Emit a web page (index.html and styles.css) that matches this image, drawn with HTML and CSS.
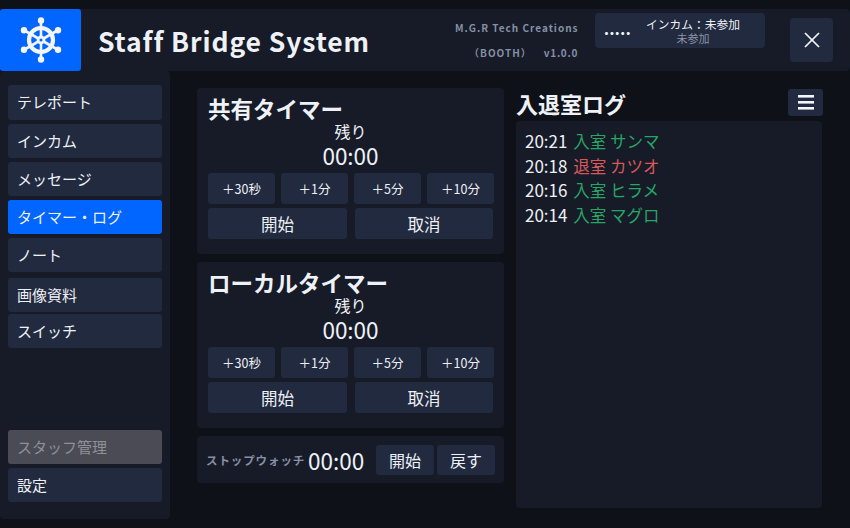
FILE: index.html
```html
<!DOCTYPE html>
<html lang="ja">
<head>
  <meta charset="UTF-8">
  <meta name="viewport" content="width=device-width, initial-scale=1.0">
  <title>Staff Bridge System</title>
  <link rel="stylesheet" href="styles.css">
</head>
<body>

<div class="app">
  <header class="header">
    <div class="logo">
      <svg width="46" height="46" viewBox="-23 -23 46 46" fill="none" stroke="#f2f5fb">
        <circle r="12" stroke-width="4.2"/>
        <g stroke-width="2.6">
          <line x1="0" y1="-20" x2="0" y2="20"/>
          <line x1="-17.3" y1="-10" x2="17.3" y2="10"/>
          <line x1="-17.3" y1="10" x2="17.3" y2="-10"/>
        </g>
        <g fill="#f2f5fb" stroke="none">
          <circle cx="0" cy="-19.5" r="3.2"/>
          <circle cx="0" cy="19.5" r="3.2"/>
          <circle cx="-17" cy="-9.8" r="3.2"/>
          <circle cx="17" cy="-9.8" r="3.2"/>
          <circle cx="-17" cy="9.8" r="3.2"/>
          <circle cx="17" cy="9.8" r="3.2"/>
          <circle r="4.4"/>
        </g>
        <circle r="1.5" fill="#0066ff" stroke="none"/>
      </svg>
    </div>
    <div class="title">Staff Bridge System</div>
    <div class="credit">
      <div>M.G.R Tech Creations</div>
      <div>（BOOTH）<span class="version">v1.0.0</span></div>
    </div>
    <div class="intercom">
      <span class="dots">.....</span>
      <div class="intercom-text">
        <div>インカム：未参加</div>
        <div class="intercom-sub">未参加</div>
      </div>
    </div>
    <button class="close-button">
      <svg width="16" height="16" viewBox="0 0 16 16" stroke="#f2f5fb" stroke-width="1.7">
        <line x1="1" y1="1" x2="15" y2="15"/>
        <line x1="15" y1="1" x2="1" y2="15"/>
      </svg>
    </button>
  </header>

  <div class="body-row">
    <nav class="sidebar">
      <div class="nav-item first">テレポート</div>
      <div class="nav-item">インカム</div>
      <div class="nav-item">メッセージ</div>
      <div class="nav-item active">タイマー・ログ</div>
      <div class="nav-item">ノート</div>
      <div class="nav-item gap-above">画像資料</div>
      <div class="nav-item tight-above">スイッチ</div>
      <div class="nav-spacer"></div>
      <div class="nav-item disabled">スタッフ管理</div>
      <div class="nav-item">設定</div>
    </nav>

    <main class="timers">
      <section class="panel">
        <h2 class="panel-title">共有タイマー</h2>
        <div class="remain">残り</div>
        <div class="time">00:00</div>
        <div class="add-row">
          <button class="btn">＋30秒</button>
          <button class="btn">＋1分</button>
          <button class="btn">＋5分</button>
          <button class="btn">＋10分</button>
        </div>
        <div class="action-row">
          <button class="btn">開始</button>
          <button class="btn">取消</button>
        </div>
      </section>

      <section class="panel">
        <h2 class="panel-title">ローカルタイマー</h2>
        <div class="remain">残り</div>
        <div class="time">00:00</div>
        <div class="add-row">
          <button class="btn">＋30秒</button>
          <button class="btn">＋1分</button>
          <button class="btn">＋5分</button>
          <button class="btn">＋10分</button>
        </div>
        <div class="action-row">
          <button class="btn">開始</button>
          <button class="btn">取消</button>
        </div>
      </section>

      <section class="stopwatch">
        <span class="sw-label">ストップウォッチ</span>
        <span class="sw-time">00:00</span>
        <button class="btn sw-btn">開始</button>
        <button class="btn sw-btn">戻す</button>
      </section>
    </main>

    <section class="log">
      <div class="log-head">
        <h2 class="log-title">入退室ログ</h2>
        <button class="menu-button">
          <svg width="16" height="15" viewBox="0 0 16 15" fill="#f2f5fb">
            <rect y="0" width="16" height="2.6"/>
            <rect y="6" width="16" height="2.6"/>
            <rect y="12" width="16" height="2.6"/>
          </svg>
        </button>
      </div>
      <div class="log-box">
        <div>20:21 <span class="in">入室 サンマ</span></div>
        <div>20:18 <span class="out">退室 カツオ</span></div>
        <div>20:16 <span class="in">入室 ヒラメ</span></div>
        <div>20:14 <span class="in">入室 マグロ</span></div>
      </div>
    </section>
  </div>
</div>

</body>
</html>
```

FILE: styles.css
```css
* {
  box-sizing: border-box;
}
body {
  margin: 0;
  width: 850px;
  height: 528px;
  overflow: hidden;
  background: #0f1118;
  color: #eef1f7;
  font-family: "Noto Sans CJK JP", "Noto Sans", sans-serif;
}
button {
  font-family: inherit;
  border: none;
  color: inherit;
  padding: 0;
}
h2 {
  margin: 0;
}
.app {
  padding-top: 9px;
}
.header {
  height: 62px;
  display: flex;
  align-items: center;
  background: #161b27;
  border-radius: 4px;
}
.logo {
  width: 81px;
  height: 62px;
  background: #0066ff;
  border-radius: 3px;
  display: flex;
  align-items: center;
  justify-content: center;
}
.title {
  margin-left: 17px;
  font-size: 26.5px;
  font-weight: 700;
  letter-spacing: 0.9px;
  color: #eef1f7;
  width: 357px;
}
.credit {
  width: 123px;
  text-align: right;
  font-size: 10px;
  font-weight: 700;
  letter-spacing: 1px;
  line-height: 25px;
  color: #8590a6;
  white-space: nowrap;
}
.version {
  margin-left: 12px;
  letter-spacing: 0.7px;
}
.intercom {
  margin-left: 17px;
  margin-top: -19px;
  width: 170px;
  height: 35px;
  background: #222a3f;
  border-radius: 4px;
  display: flex;
  align-items: center;
  padding-left: 9px;
}
.dots {
  font-size: 14px;
  font-weight: 900;
  line-height: 14px;
  letter-spacing: 0.5px;
  width: 39px;
  color: #f2f5fb;
  margin-top: -4px;
}
.intercom-text {
  width: 100px;
  text-align: center;
  font-size: 11.75px;
  line-height: 15px;
}
.intercom-sub {
  font-size: 11px;
  color: #8c94a6;
}
.close-button {
  margin-left: 25px;
  width: 43px;
  height: 44px;
  background: #222a3f;
  border-radius: 4px;
  display: flex;
  align-items: center;
  justify-content: center;
}
.body-row {
  display: flex;
  align-items: flex-start;
}
.sidebar {
  width: 170px;
  height: 448px;
  background: #161b27;
  border-radius: 4px;
  padding: 14px 8px 17px;
  display: flex;
  flex-direction: column;
  gap: 4px;
}
.nav-item {
  height: 34px;
  background: #222a3f;
  border-radius: 3px;
  padding-left: 9px;
  font-size: 15px;
  line-height: 33px;
}
.nav-item.first {
  height: 35px;
}
.nav-item.active {
  background: #0066ff;
}
.nav-item.disabled {
  background: #4a4b55;
  color: #8f9097;
}
.nav-item.gap-above {
  margin-top: 2px;
}
.nav-item.tight-above {
  margin-top: -2px;
}
.nav-spacer {
  flex: 1;
}
.timers {
  width: 307px;
  margin-left: 27px;
  padding-top: 17px;
  display: flex;
  flex-direction: column;
  gap: 8px;
}
.panel {
  height: 166px;
  background: #161b27;
  border-radius: 4px;
  padding: 6px 11px 0;
}
.panel-title {
  font-size: 22.5px;
  font-weight: 700;
  line-height: 28px;
  margin-bottom: 2px;
}
.remain {
  margin-top: -2px;
  text-align: center;
  font-size: 16px;
  line-height: 18px;
}
.time {
  text-align: center;
  font-size: 22.5px;
  line-height: 30px;
  margin-bottom: 3px;
}
.add-row {
  display: grid;
  grid-template-columns: repeat(4, 67px);
  gap: 6px;
}
.action-row {
  display: grid;
  grid-template-columns: 139px 138px;
  gap: 8px;
  margin-top: 4px;
}
.btn {
  background: #222a3f;
  border-radius: 3px;
  font-size: 12.5px;
  height: 31px;
}
.action-row .btn {
  font-size: 16.5px;
  height: 31px;
}
.stopwatch {
  height: 47px;
  background: #161b27;
  border-radius: 4px;
  display: flex;
  align-items: center;
  padding-left: 9px;
}
.sw-label {
  font-size: 11.5px;
  font-weight: 700;
  letter-spacing: 0.9px;
  color: #8590a6;
  width: 102px;
  white-space: nowrap;
}
.sw-time {
  font-size: 22.5px;
  width: 68px;
}
.sw-btn {
  width: 58px;
  height: 30px;
  font-size: 16px;
  margin-right: 3px;
}
.log {
  width: 306px;
  margin-left: 12px;
  padding-top: 18px;
}
.log-head {
  display: flex;
  align-items: flex-start;
  justify-content: space-between;
  height: 32px;
}
.log-title {
  font-size: 22px;
  font-weight: 700;
  line-height: 28px;
}
.menu-button {
  width: 35px;
  height: 27px;
  margin-right: -1px;
  background: #222a3f;
  border-radius: 3px;
  display: flex;
  align-items: center;
  justify-content: center;
}
.log-box {
  height: 387px;
  background: #161b27;
  border-radius: 4px;
  padding: 8px 9px;
  font-size: 17px;
  line-height: 24.5px;
}
.in,
.out {
  font-size: 16.5px;
  margin-left: 2px;
}
.in {
  color: #27a566;
}
.out {
  color: #d9595a;
}
```
